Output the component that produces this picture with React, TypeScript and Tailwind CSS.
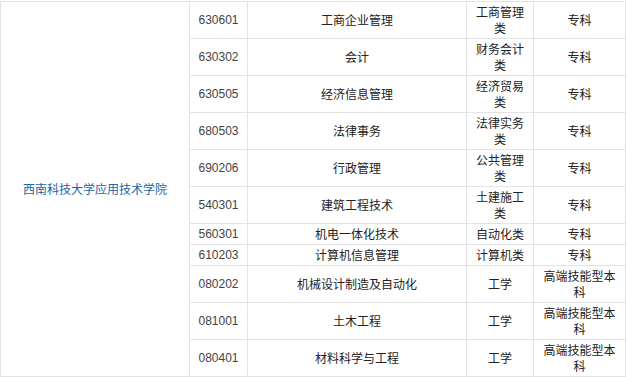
import React from 'react';

const rows: Array<[string, string, string, string, boolean]> = [
  ['630601', '工商企业管理', '工商管理类', '专科', true],
  ['630302', '会计', '财务会计类', '专科', true],
  ['630505', '经济信息管理', '经济贸易类', '专科', true],
  ['680503', '法律事务', '法律实务类', '专科', true],
  ['690206', '行政管理', '公共管理类', '专科', true],
  ['540301', '建筑工程技术', '土建施工类', '专科', true],
  ['560301', '机电一体化技术', '自动化类', '专科', false],
  ['610203', '计算机信息管理', '计算机类', '专科', false],
  ['080202', '机械设计制造及自动化', '工学', '高端技能型本科', true],
  ['081001', '土木工程', '工学', '高端技能型本科', true],
  ['080401', '材料科学与工程', '工学', '高端技能型本科', true],
];

const cjk = "font-['Noto_Sans_CJK_SC','Noto_Sans',sans-serif]";

export default function App() {
  return (
    <div className="w-[627px] h-[377px] bg-white pt-[1px]">
      <table className="border-collapse table-fixed w-[625px] text-[12px] leading-[16px]">
        <colgroup>
          <col className="w-[189px]" />
          <col className="w-[58px]" />
          <col className="w-[219px]" />
          <col className="w-[67px]" />
          <col className="w-[92px]" />
        </colgroup>
        <tbody>
          {rows.map((r, i) => (
            <tr key={r[0]} className={r[4] ? 'h-[37px]' : 'h-[21px]'}>
              {i === 0 && (
                <td
                  rowSpan={rows.length}
                  className={`border border-[#e3e3e3] text-center align-middle px-[5px] text-[#1f63a6] ${cjk}`}
                >
                  西南科技大学应用技术学院
                </td>
              )}
              <td className="border border-[#e3e3e3] text-center align-middle px-[4px] py-0 text-[#444] font-['Liberation_Sans',Arial,sans-serif]">
                {r[0]}
              </td>
              <td className={`border border-[#e3e3e3] text-center align-middle px-[5px] py-0 text-[#222] ${cjk}`}>
                {r[1]}
              </td>
              <td className={`border border-[#e3e3e3] text-center align-middle px-[5px] py-0 text-[#222] ${cjk}`}>
                {r[2]}
              </td>
              <td className={`border border-[#e3e3e3] text-center align-middle px-[5px] py-0 text-[#222] ${cjk}`}>
                {r[3]}
              </td>
            </tr>
          ))}
        </tbody>
      </table>
    </div>
  );
}
